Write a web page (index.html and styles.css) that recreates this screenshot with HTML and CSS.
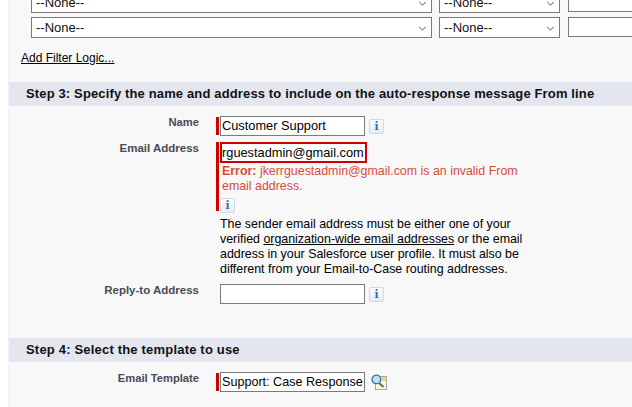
FILE: index.html
```html
<!DOCTYPE html>
<html lang="en">
<head>
<meta charset="utf-8">
<title>Auto-Response Rule</title>
<link rel="stylesheet" href="styles.css">
</head>
<body>
<main class="panel">
  <div class="filters">
    <div class="filter-row first">
      <div class="sel wide">--None--<svg class="chev" viewBox="0 0 10 6"><path d="M1 1l4 4 4-4"/></svg></div>
      <div class="sel narrow">--None--<svg class="chev" viewBox="0 0 10 6"><path d="M1 1l4 4 4-4"/></svg></div>
      <div class="box"></div>
    </div>
    <div class="filter-row">
      <div class="sel wide">--None--<svg class="chev" viewBox="0 0 10 6"><path d="M1 1l4 4 4-4"/></svg></div>
      <div class="sel narrow">--None--<svg class="chev" viewBox="0 0 10 6"><path d="M1 1l4 4 4-4"/></svg></div>
      <div class="box"></div>
    </div>
  </div>
  <a class="logic" href="#">Add Filter Logic...</a>

  <h2 class="step step3">Step 3: Specify the name and address to include on the auto-response message From line</h2>
  <div class="form">
    <div class="label small">Name</div>
    <div class="field">
      <span class="req"></span><span class="input">Customer Support</span><span class="info">i</span>
    </div>
    <div class="label email-label">Email Address</div>
    <div class="field email-field">
      <div class="req-block">
        <span class="input error">rguestadmin@gmail.com</span>
        <p class="err"><b>Error:</b> jkerrguestadmin@gmail.com is an invalid From email address.</p>
        <span class="info solo">i</span>
      </div>
      <p class="help">The sender email address must be either one of your verified <a href="#">organization-wide email addresses</a> or the email address in your Salesforce user profile. It must also be different from your Email-to-Case routing addresses.</p>
    </div>
    <div class="label reply-label">Reply-to Address</div>
    <div class="field reply-field">
      <span class="input"></span><span class="info">i</span>
    </div>
  </div>

  <h2 class="step step4">Step 4: Select the template to use</h2>
  <div class="form">
    <div class="label small">Email Template</div>
    <div class="field tpl-field">
      <span class="req"></span><span class="input tpl">Support: Case Response</span>
      <svg class="lookup" viewBox="0 0 16 16">
        <rect x="4.5" y="2.5" width="11" height="13" fill="#f4f4f0" stroke="#a9a9a9"/>
        <rect x="9" y="3" width="6" height="4" fill="#f5d67a"/>
        <path d="M8 9l4.5 4" stroke="#8a6a3a" stroke-width="2.2"/>
        <circle cx="5.4" cy="5.4" r="4.3" fill="#bfe0f5" stroke="#3a74a8" stroke-width="1.3"/>
      </svg>
    </div>
  </div>
</main>
</body>
</html>
```
FILE: styles.css
```css
* { box-sizing: border-box; }
html, body { margin: 0; height: 407px; overflow: hidden; background: #fff; }
body { font-family: "Liberation Sans", Arial, sans-serif; font-size: 12px; color: #000; padding-left: 8px; }
.panel { width: 624px; height: 407px; background: #f8f8f8; border-left: 1px solid #f0f0f0; overflow: hidden; }
.filters { padding: 0 0 0 22px; margin-top: -8px; }
.filter-row { display: flex; height: 21px; margin-top: 4px; }
.filter-row.first { margin-top: 0; }
.sel { flex: none; height: 21px; background: #fff; border: 1px solid #7a7a7a; font-size: 13px; line-height: 20px; padding-left: 4px; position: relative; color: #111; }
.wide { width: 401px; margin-right: 7px; }
.narrow { width: 121px; margin-right: 8px; }
.box { flex: none; width: 80px; height: 20px; background: #fff; border: 1px solid #7a7a7a; }
.chev { position: absolute; right: 4px; top: 8px; width: 9px; height: 5px; fill: none; stroke: #555; stroke-width: 1.2; }
.logic { display: block; margin: 13px 0 0 12px; font-size: 12px; line-height: 14px; color: #000; text-decoration: underline; width: max-content; }
.step { margin: 0; height: 24px; background: #e3e6ef; font-size: 13px; line-height: 24px; padding-left: 17px; font-weight: bold; color: #111; }
.step3 { margin-top: 17px; letter-spacing: 0.14px; }
.step4 { margin-top: 34px; letter-spacing: 0.19px; }
.form { display: grid; grid-template-columns: 190px 1fr; column-gap: 17px; }
.label { font-size: 11.5px; font-weight: bold; color: #4a4a56; text-align: right; line-height: 13px; }
.label.small { font-size: 11.2px; padding-top: 10px; }
.field { display: flex; align-items: center; padding-top: 10px; }
.req { width: 3px; height: 18px; background: #c00; margin-right: 1px; }
.input { display: block; flex: none; width: 145px; height: 20px; background: #fff; border: 1px solid #7a7a7a; font-size: 12.8px; line-height: 18px; padding-left: 1px; color: #000; white-space: nowrap; overflow: hidden; }
.info { flex: none; width: 15px; height: 15px; margin: 1px 0 0 4px; border: 1px solid #d3d7de; border-radius: 2px; background: linear-gradient(#fbfcfd, #e9ecf0); font: bold 10.5px/13px "DejaVu Serif", serif; text-align: center; color: #1f6fc4; }
.email-label { padding-top: 6px; }
.email-field { display: block; padding-top: 6px; }
.req-block { border-left: 3px solid #c00; padding-left: 1px; height: 69px; width: 330px; }
.input.error { width: 147px; height: 21px; border: 2px solid #c00; line-height: 17px; padding-left: 0; }
.err { margin: 0 0 0 2px; padding-top: 1px; width: 305px; font-size: 12.4px; line-height: 15px; color: #d74c3b; }
.err b { color: #d74c3b; }
.info.solo { display: block; margin: 4px 0 0 0; }
.help { margin: 6px 0 0 4px; width: 320px; font-size: 12.4px; line-height: 15px; color: #000; }
.help a { color: #000; text-decoration: underline; }
.reply-label { padding-top: 7px; }
.reply-field { padding-top: 7px; padding-left: 4px; }
.tpl-field { padding-top: 10px; }
.input.tpl { font-size: 12.6px; }
.lookup { flex: none; width: 16px; height: 16px; margin-left: 6px; }
```
